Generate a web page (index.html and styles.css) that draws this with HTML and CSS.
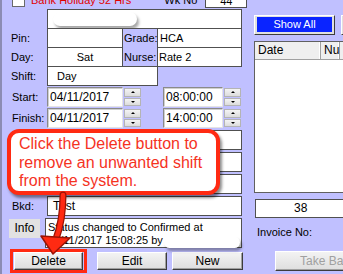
FILE: index.html
```html
<!DOCTYPE html>
<html>
<head>
  <title>Shift</title>
<link rel="stylesheet" href="styles.css">
</head>
<body>
<div class="screen">
 <div class="left">
  <div class="toprow">
   <span class="check"></span>
   <span class="holiday">Bank Holiday 52 Hrs</span>
   <span class="wk">Wk No</span>
   <span class="wkbox">44</span>
  </div>

  <div class="sheet">
   <div class="cell top"><span class="blot blot1"></span></div>
   <div class="lbl r2">Pin:</div>
   <div class="cell pin"></div>
   <div class="cell side"><span>Grade:</span><span>Nurse:</span></div>
   <div class="cell grade">HCA</div>
   <div class="lbl r3">Day:</div>
   <div class="cell day">Sat</div>
   <div class="cell nurse">Rate 2</div>
   <div class="lbl r4">Shift:</div>
   <div class="cell shift">Day</div>
  </div>

  <div class="dtrow first">
   <div class="lbl">Start:</div>
   <div class="field date">04/11/2017</div>
   <div class="spin"><i class="up"></i><i class="dn"></i></div>
   <div class="field time">08:00:00</div>
   <div class="spin"><i class="up"></i><i class="dn"></i></div>
  </div>
  <div class="dtrow">
   <div class="lbl">Finish:</div>
   <div class="field date">04/11/2017</div>
   <div class="spin"><i class="up"></i><i class="dn"></i></div>
   <div class="field time">14:00:00</div>
   <div class="spin"><i class="up"></i><i class="dn"></i></div>
  </div>

  <div class="boxrow"><div class="lbl"></div><div class="box"></div></div>
  <div class="boxrow"><div class="lbl"></div><div class="box"></div></div>
  <div class="boxrow"><div class="lbl"></div><div class="box"></div></div>
  <div class="boxrow"><div class="lbl">Bkd:</div><div class="box">Test</div></div>

  <div class="inforow">
   <div class="infobtn">Info</div>
   <div class="infobox">Status changed to Confirmed at<br>04/11/2017 15:08:25 by<span class="blot blot2"></span></div>
  </div>

  <div class="btnrow">
   <button class="winbtn del">Delete</button>
   <button class="winbtn edit">Edit</button>
   <button class="winbtn new">New</button>
  </div>
 </div>

 <div class="right">
  <div class="btnline">
   <div class="showall"><span>Show All</span></div>
   <div class="nextbtn"></div>
  </div>
  <div class="list">
   <div class="listhead"><span class="col date">Date</span><span class="col">Nu</span></div>
  </div>
  <div class="total">38</div>
  <div class="invoice">Invoice No:</div>
  <button class="winbtn takeback">Take Back</button>
 </div>

 <div class="callout">Click the Delete button to<br>remove an unwanted shift<br>from the system.</div>
 <div class="ring"></div>
 <svg class="arrow" width="343" height="274" viewBox="0 0 343 274">
  <path d="M63 195 Q63 220 56 239" fill="none" stroke="#9a1205" stroke-width="7" stroke-linecap="round"/>
  <path d="M63 195 Q63 220 56 239" fill="none" stroke="#ff2a12" stroke-width="4.5" stroke-linecap="round"/>
  <polygon points="41,236 70,238 53,254" fill="#ff2a12" stroke="#9a1205" stroke-width="1.5" stroke-linejoin="round"/>
 </svg>
</div>
</body>
</html>
```

FILE: styles.css
```css
body {
  margin: 0;
  background: #c0c0ff;
  font-family: "Liberation Sans", Arial, sans-serif;
  font-size: 11px;
  color: #000;
}

.screen {
  position: relative;
  width: 343px;
  height: 274px;
  overflow: hidden;
  display: flex;
  box-shadow: inset 2px 0 #8c8cb4;
}

.left {
  width: 247px;
  flex: none;
}

.lbl {
  width: 47px;
  flex: none;
  box-sizing: border-box;
  padding-left: 12px;
}

/* top line, cut off by the screenshot */
.toprow {
  height: 9px;
  display: flex;
  align-items: flex-start;
  line-height: 13px;
  white-space: nowrap;
}
.toprow span { flex: none; }
.check {
  width: 11px;
  height: 11px;
  margin: -6px 0 0 12px;
  background: #fff;
  border: 1px solid #6a6a6a;
}
.holiday {
  margin: -6px 0 0 6px;
  color: #e00000;
}
.wk {
  margin: -6px 0 0 33px;
}
.wkbox {
  width: 42px;
  height: 18px;
  margin: -10px 0 0 8px;
  box-sizing: border-box;
  background: #fff;
  border: 1px solid #505050;
  text-align: center;
  line-height: 20px;
}

/* name / pin / grade block */
.sheet {
  margin-top: 1px;
  display: grid;
  grid-template-columns: 47px 74px 34px 83px;
  grid-template-rows: repeat(4, 18px);
  gap: 1px;
  line-height: 18px;
}
.sheet .lbl { padding-left: 11px; }
.cell {
  position: relative;
  background: #fff;
  outline: 1px solid #505050;
}
.top { grid-column: 2 / 5; grid-row: 1; }
.r2 { grid-column: 1; grid-row: 2; }
.r3 { grid-column: 1; grid-row: 3; }
.r4 { grid-column: 1; grid-row: 4; }
.pin { grid-column: 2; grid-row: 2; }
.side {
  grid-column: 3;
  grid-row: 2 / 4;
  background: #c0c0ff;
  display: flex;
  flex-direction: column;
  padding-left: 1px;
  gap: 1px;
}
.grade { grid-column: 4; grid-row: 2; padding-left: 2px; }
.day { grid-column: 2; grid-row: 3; text-align: center; }
.nurse { grid-column: 4; grid-row: 3; padding-left: 1px; }
.shift { grid-column: 2 / 4; grid-row: 4; padding-left: 9px; }

/* redacted bits */
.blot {
  position: absolute;
  background: #fff;
  border-radius: 9px;
  box-shadow: 2px 3px 3px rgba(0, 0, 0, 0.35);
}
.blot1 { left: 5px; top: 2px; width: 84px; height: 14px; }
.blot2 { left: 118px; top: 18px; width: 76px; height: 11px; }

/* start / finish */
.dtrow {
  display: flex;
  align-items: center;
  height: 20px;
  margin-top: 1px;
}
.dtrow.first { margin-top: 2px; }
.field {
  height: 20px;
  box-sizing: border-box;
  background: #fff;
  border: 1px solid;
  border-color: #8a8a8a #e4e4e4 #e4e4e4 #8a8a8a;
  box-shadow: inset 1px 1px #d0d0d0;
  padding-left: 2px;
  font-size: 12px;
  line-height: 18px;
}
.date { width: 76px; }
.time { width: 60px; margin-left: 22px; }
.spin {
  width: 17px;
  height: 18px;
  margin-left: 1px;
  display: flex;
  flex-direction: column;
  gap: 1px;
}
.spin i {
  position: relative;
  flex: 1;
  background: linear-gradient(#f4f4f4, #dcdcdc);
  border: 1px solid #b4b4b4;
}
.spin i::after {
  content: "";
  position: absolute;
  left: 6px;
  top: 2px;
  border-left: 2px solid transparent;
  border-right: 2px solid transparent;
}
.spin .up::after { border-bottom: 2px solid #000; }
.spin .dn::after { border-top: 2px solid #000; }

.boxrow {
  display: flex;
  height: 20px;
  margin-top: 2px;
  align-items: center;
}
.box {
  width: 195px;
  height: 20px;
  box-sizing: border-box;
  background: #fff;
  border: 1px solid #505050;
  padding-left: 5px;
  font-size: 12px;
  line-height: 18px;
}

.inforow {
  display: flex;
  align-items: flex-start;
  height: 30px;
  margin-top: 2px;
}
.infobtn {
  width: 31px;
  height: 19px;
  margin: 1px 0 0 9px;
  background: #e2e2e2;
  text-align: center;
  line-height: 19px;
  font-size: 12px;
}
.infobox {
  position: relative;
  width: 197px;
  height: 30px;
  margin-left: 5px;
  box-sizing: border-box;
  background: #fff;
  border: 1px solid #505050;
  padding: 2px 0 0 2px;
  line-height: 13px;
}

.btnrow {
  display: flex;
  margin-top: 4px;
}
.winbtn {
  height: 18px;
  padding: 0;
  font-family: inherit;
  font-size: 12px;
  background: linear-gradient(#f3f3f3, #dedede);
  border: 1px solid;
  border-color: #fff #3c3c3c #3c3c3c #fff;
  box-shadow: inset -1px -1px #a0a0a0;
}
.del { width: 69px; margin-left: 14px; }
.edit { width: 70px; margin-left: 14px; }
.new { width: 71px; margin-left: 5px; }

/* right side */
.right {
  margin-left: 7px;
  width: 96px;
  flex: none;
}
.btnline {
  display: flex;
  gap: 6px;
  margin-top: 15px;
}
.showall {
  width: 81px;
  height: 20px;
  flex: none;
  box-sizing: border-box;
  border: 1px solid;
  border-color: #fff #3c3c3c #3c3c3c #fff;
  background: #e0e0e0;
  padding: 1px 2px 2px 2px;
}
.showall span {
  display: block;
  height: 15px;
  background: #0a24ff;
  color: #fff;
  text-align: center;
  line-height: 15px;
}
.nextbtn {
  width: 20px;
  height: 20px;
  flex: none;
  box-sizing: border-box;
  border: 1px solid;
  border-color: #fff #3c3c3c #3c3c3c #fff;
  background: #e0e0e0;
}
.list {
  margin-top: 6px;
  height: 152px;
  box-sizing: border-box;
  background: #fff;
  border: 1px solid #606060;
}
.listhead {
  display: flex;
  height: 17px;
  background: #efefef;
  border-bottom: 1px solid #a0a0a0;
  line-height: 17px;
  font-size: 12px;
}
.col {
  padding-left: 3px;
  border-right: 1px solid #a0a0a0;
  box-shadow: inset -1px 0 #fff;
}
.col.date { width: 62px; }
.total {
  margin: 6px 0 0 1px;
  height: 19px;
  box-sizing: border-box;
  background: #fff;
  border: 1px solid #505050;
  padding-left: 38px;
  font-size: 12px;
  line-height: 17px;
}
.invoice {
  margin: 8px 0 0 3px;
  font-size: 11px;
  line-height: 13px;
}
.takeback {
  display: block;
  width: 90px;
  height: 20px;
  margin: 12px 0 0 21px;
  color: #a0a0a0;
  text-align: left;
  padding-left: 24px;
  white-space: nowrap;
}

/* annotation */
.callout {
  position: absolute;
  left: 7px;
  top: 129px;
  width: 213px;
  height: 66px;
  box-sizing: border-box;
  padding: 2px 0 0 8px;
  background: #fff;
  border: 4px solid #ff2a12;
  border-radius: 12px;
  box-shadow: 2px 3px 3px rgba(0, 0, 0, 0.45);
  color: #f5331f;
  font-size: 16px;
  line-height: 18.5px;
}
.ring {
  position: absolute;
  left: 10px;
  top: 249px;
  width: 77px;
  height: 24px;
  box-sizing: border-box;
  border: 3px solid #ff2a12;
}
.arrow {
  position: absolute;
  left: 0;
  top: 0;
  pointer-events: none;
}
```
